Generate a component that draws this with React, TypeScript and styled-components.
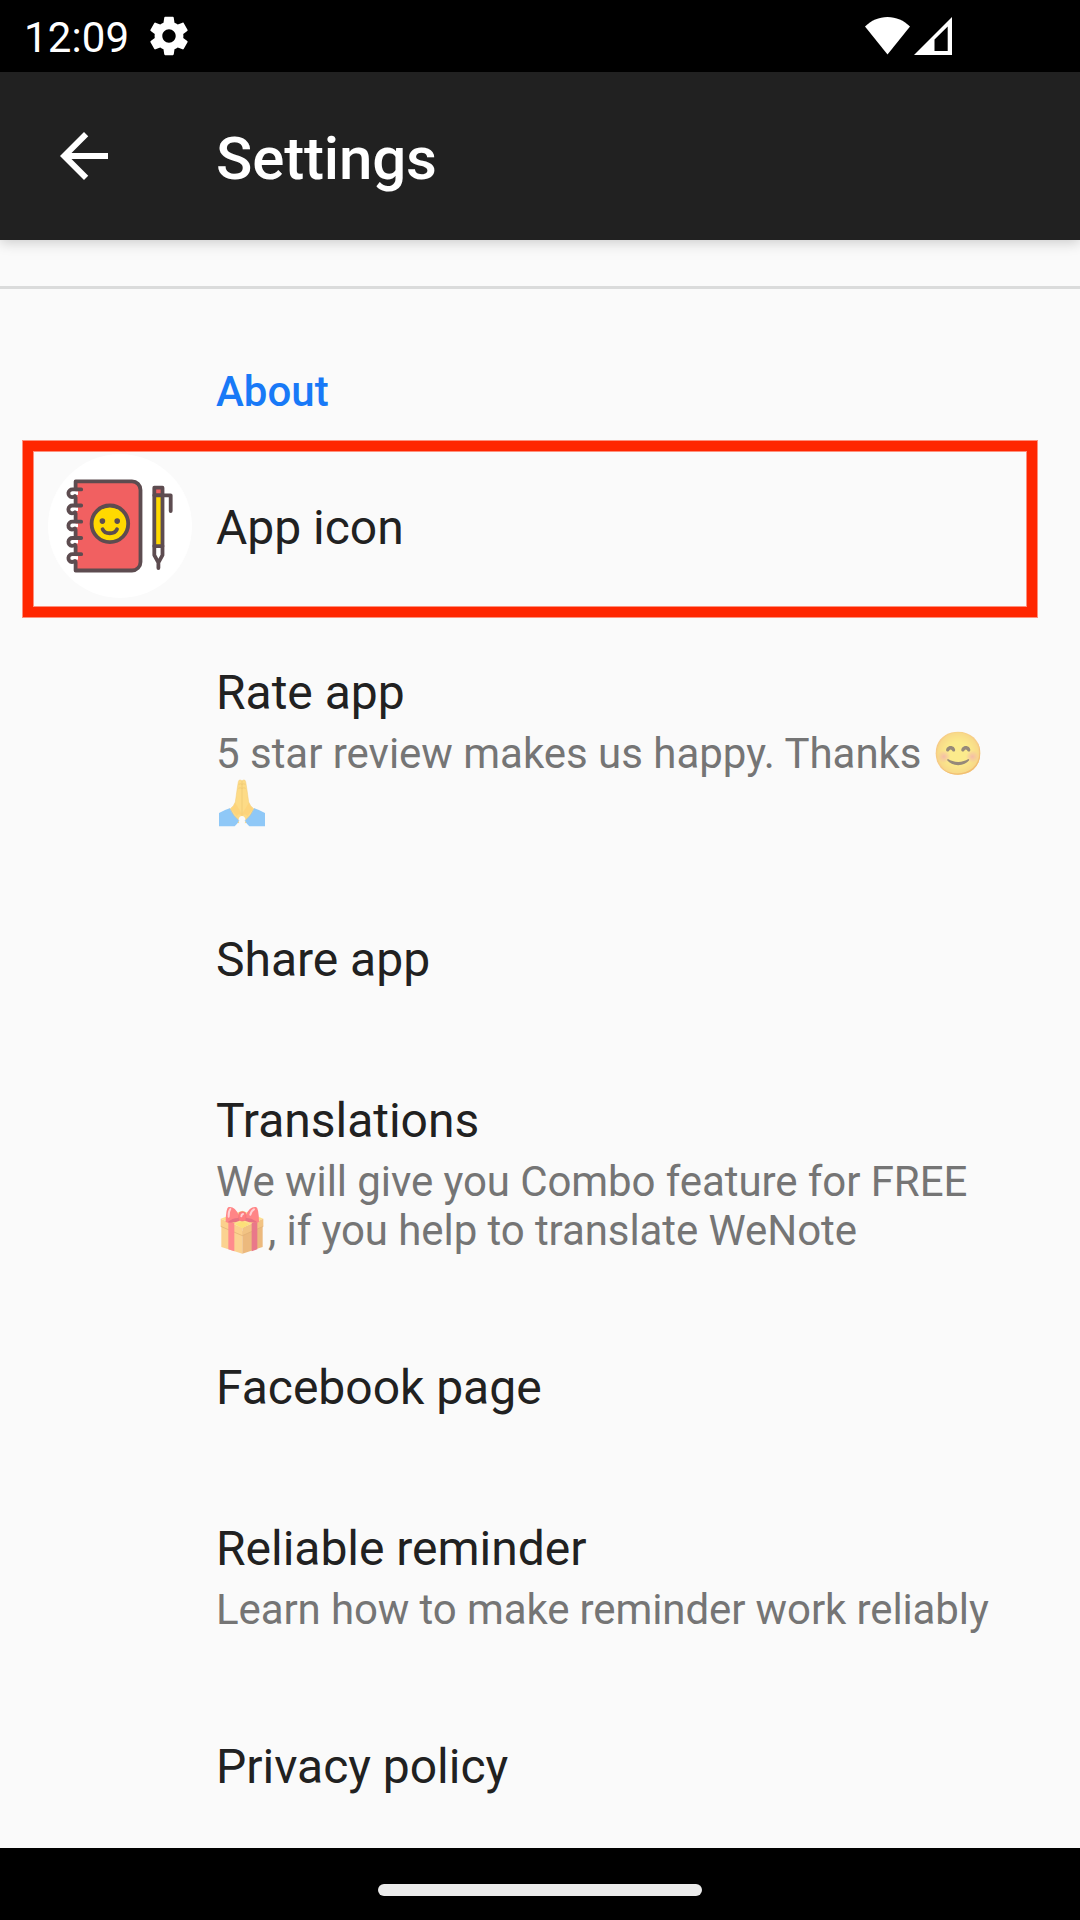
import React from "react";
import styled, { createGlobalStyle } from "styled-components";

const GlobalStyle = createGlobalStyle`
  body { margin: 0; background: #fafafa; }
  * { box-sizing: border-box; }
`;

const Screen = styled.div`
  width: 1080px;
  height: 1920px;
  display: flex;
  flex-direction: column;
  overflow: hidden;
  background: #fafafa;
  font-family: Roboto, "Liberation Sans", sans-serif;
  color: #212121;
`;

const StatusBar = styled.div`
  height: 72px;
  flex: none;
  display: flex;
  align-items: center;
  padding: 0 128px 0 24px;
  background: #000;
  color: #fff;
`;

const Clock = styled.span`
  font-size: 42px;
  line-height: 50px;
  width: 122px;
  padding-top: 3px;
  letter-spacing: 0.1px;
`;

const StatusIcons = styled.div`
  margin-left: auto;
  display: flex;
  gap: 4px;
`;

const AppBar = styled.header`
  height: 168px;
  flex: none;
  display: flex;
  align-items: center;
  padding: 0 48px;
  gap: 96px;
  background: #212121;
  color: #fff;
  z-index: 1;
  box-shadow: 0 3px 12px rgba(0, 0, 0, 0.18);
`;

const AppTitle = styled.h1`
  margin: 0;
  padding-top: 5px;
  font-size: 60px;
  line-height: 70px;
  font-weight: 500;
  letter-spacing: -0.15px;
`;

const List = styled.main`
  flex: 1;
  overflow: hidden;
  padding-top: 46px;
`;

const Category = styled.section`
  border-top: 3px solid #dadbdb;
`;

const CategoryTitle = styled.h2`
  margin: 0;
  height: 153px;
  padding: 78px 0 0 216px;
  font-size: 42px;
  line-height: 50px;
  font-weight: 500;
  color: #1879f7;
`;

const Row = styled.div<{ $compact?: boolean }>`
  position: relative;
  display: grid;
  grid-template-columns: 168px 1fr;
  align-items: center;
  padding: ${(p) => (p.$compact ? "12px 48px" : "50px 48px 46px")};
`;

const Labels = styled.div`
  grid-column: 2;
`;

const Title = styled.div<{ $lowered?: boolean }>`
  padding-top: ${(p) => (p.$lowered ? "2px" : "0")};
  font-size: 48px;
  line-height: 65px;
  white-space: nowrap;
  letter-spacing: -0.02px;
`;

const Summary = styled.div<{ $tracking?: number }>`
  padding: 4px 0;
  font-size: 42px;
  line-height: 49px;
  color: #757575;
  white-space: nowrap;
  letter-spacing: ${(p) => p.$tracking ?? 0}px;
`;

const SummaryLine = styled.div`
  height: 49px;
`;

const Emoji = styled.span`
  opacity: 0.54;
  color: #000;
`;

const EmojiDrawing = styled.svg`
  width: 52px;
  height: 49px;
  vertical-align: -10px;
`;

const Highlight = styled.div`
  position: absolute;
  left: 23px;
  top: -1px;
  width: 1014px;
  height: 176px;
  border: 10px solid #ff2600;
  box-shadow: 0 0 0 1px rgba(255, 38, 0, 0.5), inset 0 0 0 1px rgba(255, 38, 0, 0.5);
`;

const NavBar = styled.footer`
  height: 72px;
  flex: none;
  display: flex;
  justify-content: center;
  padding-top: 36px;
  background: #000;
`;

const Handle = styled.div`
  width: 324px;
  height: 12px;
  border-radius: 6px;
  background: #ebebeb;
`;

const GearIcon = () => (
  <svg width="46" height="46" viewBox="0 0 24 24" fill="#fff">
    <path d="M19.43 12.98c.04-.32.07-.64.07-.98s-.03-.66-.07-.98l2.11-1.65c.19-.15.24-.42.12-.64l-2-3.46c-.12-.22-.39-.3-.61-.22l-2.49 1c-.52-.4-1.08-.73-1.69-.98l-.38-2.65C14.46 2.18 14.25 2 14 2h-4c-.25 0-.46.18-.49.42l-.38 2.65c-.61.25-1.17.59-1.69.98l-2.49-1c-.23-.09-.49 0-.61.22l-2 3.46c-.13.22-.07.49.12.64l2.11 1.65c-.04.32-.07.65-.07.98s.03.66.07.98l-2.11 1.65c-.19.15-.24.42-.12.64l2 3.46c.12.22.39.3.61.22l2.49-1c.52.4 1.08.73 1.69.98l.38 2.65c.03.24.24.42.49.42h4c.25 0 .46-.18.49-.42l.38-2.65c.61-.25 1.17-.59 1.69-.98l2.49 1c.23.09.49 0 .61-.22l2-3.46c.12-.22.07-.49-.12-.64l-2.11-1.65zM12 15.5c-1.93 0-3.5-1.57-3.5-3.5s1.57-3.5 3.5-3.5 3.5 1.57 3.5 3.5-1.57 3.5-3.5 3.5z" />
  </svg>
);

const WifiIcon = () => (
  <svg width="45" height="38" viewBox="0 0 45 38" fill="#fff">
    <path d="M0 9.6C6 3.4 14 0 22.5 0S39 3.4 45 9.6L22.5 37.5z" />
  </svg>
);

const SignalIcon = () => (
  <svg width="38" height="38" viewBox="0 0 38 38" fill="#fff">
    <path fillRule="evenodd" d="M0 38 38 0V38zM20.5 22.5V34H33.7V9.5z" />
  </svg>
);

const BackIcon = () => (
  <svg width="72" height="72" viewBox="0 0 24 24" fill="#fff">
    <path d="M20 11H7.83l5.59-5.59L12 4l-8 8 8 8 1.41-1.41L7.83 13H20v-2z" />
  </svg>
);

const HandsDrawing = () => (
  <EmojiDrawing viewBox="18 23 156 147" role="img" aria-label="folded hands">
    <path
      d="M85 34q1-6 6-5l5 2 5-2q5-1 6 5l4 25 5 36q4 12 15 20l-18 42h-34L61 115q11-8 15-20l5-36z"
      fill="#fddb86"
      stroke="#f3cb74"
      strokeWidth="1.5"
    />
    <path d="M96 32v104M86 42q5-3 10 0 5-3 10 0M85 54q5-3 11 0 6-3 11 0" fill="none" stroke="#edc571" strokeWidth="2" />
    <path d="M76 98q-4 11-13 18l17 22q5-12 16-2 11-10 16 2l17-22q-9-7-13-18l-20 33z" fill="#fdcf75" opacity="0.6" />
    <path d="M85 150q2-13 11-13t11 13l-6 18H91z" fill="#fafafa" />
    <path d="M27 128q14-8 32-14 9 22 28 37-5 9-13 17H27z" fill="#8fc8f7" />
    <path d="M165 128q-14-8-32-14-9 22-28 37 5 9 13 17h47z" fill="#8fc8f7" />
    <path d="M59 114q9 22 28 37M133 114q-9 22-28 37" fill="none" stroke="#a9c0c9" strokeWidth="2" />
  </EmojiDrawing>
);

const GiftDrawing = () => (
  <EmojiDrawing viewBox="18 18 156 147" role="img" aria-label="wrapped gift">
    <path d="M34 72 97 94v67L34 141z" fill="#fbd291" />
    <path d="M158 72 97 94v67l61-20z" fill="#ecb97d" />
    <path d="m32 56 65-24 63 24-63 27z" fill="#fde08c" />
    <path d="M32 56 97 83v24L32 79z" fill="#fbd08c" />
    <path d="M160 56 97 83v24l63-28z" fill="#f2c383" />
    <path d="m32 79 65 28 63-28" fill="none" stroke="#e0ae72" strokeWidth="2" />
    <path d="M55 62 73 70v84l-18-6z" fill="#ff8a8d" />
    <path d="M142 62 125 70v84l17-6z" fill="#e9788a" />
    <path d="m76 73 21-9 21 9-21 12z" fill="#fce079" />
    <path d="M86 45Q75 18 56 21q-8 1-9 45 14 6 41-5zM108 45q11-27 30-24 8 1 9 45-14 6-41-5z" fill="#ff8586" />
    <path d="M52 67q17-14 34-13l3 8q-18 8-37 5zM142 67q-17-14-34-13l-3 8q18 8 37 5z" fill="#e77282" />
    <rect x="86" y="35" width="22" height="28" rx="9" fill="#ff7c7e" stroke="#ed6c76" strokeWidth="1.5" />
    <path d="M61 27q-6 8-5 23M132 28q-8 4-11 16M99 42q-5 1-5 7" fill="none" stroke="#ffd1d4" strokeWidth="6" strokeLinecap="round" />
  </EmojiDrawing>
);

const ringTops = [35.4, 51.5, 67.7, 84, 100.2];

const NotebookIcon = () => (
  <svg
    width="144"
    height="144"
    viewBox="0 0 144 144"
    fill="none"
    stroke="#5d4c50"
    strokeWidth="3.8"
    strokeLinecap="round"
    strokeLinejoin="round"
  >
    <circle cx="72" cy="72" r="72" fill="#fff" stroke="none" />
    <path d="M27.6 27.4H84a8.5 8.5 0 0 1 8.5 8.5V108a8.5 8.5 0 0 1-8.5 8.5H27.6z" fill="#f16061" stroke="none" />
    <path d="M27.6 35.4V27.4H84a8.5 8.5 0 0 1 8.5 8.5V108a8.5 8.5 0 0 1-8.5 8.5H27.6V108" />
    {ringTops.map((y, i) => (
      <g key={y}>
        <path d={`M26 ${y + 1.9}h4v3.6h-4z`} fill="#fff" stroke="none" />
        <path d={`M33.2 ${y}H24.6a3.9 3.9 0 0 0-.6 7.8q2 0 3-1.1`} />
        {i < 4 && <path d={`M27.6 ${y + 8}V${y + 15.5}`} />}
      </g>
    ))}
    <circle cx="61.9" cy="69.8" r="18.3" fill="#ffd900" />
    <circle cx="54.4" cy="67.1" r="2.8" fill="#5d4c50" stroke="none" />
    <circle cx="69.2" cy="67.1" r="2.8" fill="#5d4c50" stroke="none" />
    <path d="M54.6 75.2c2.4 5.4 12 5.4 14.4 0" />
    <path d="M106.3 33.7h8.2v7.6h-8.2z" fill="#f16061" />
    <path d="M106.3 41.3h8.2v50.8h-8.2z" fill="#ffd900" />
    <path d="M106.3 92.1v9l4.1 7.5 4.1-7.5v-9M110.4 108v6M114.5 41.3h8.2V57" />
  </svg>
);

type Item = { title: string; lines?: React.ReactNode[]; tracking?: number };

const items: Item[] = [
  {
    title: "Rate app",
    lines: [<>5 star review makes us happy. Thanks <Emoji>😊</Emoji></>, <HandsDrawing />],
    tracking: -0.02,
  },
  { title: "Share app" },
  {
    title: "Translations",
    lines: [
      "We will give you Combo feature for FREE",
      <><GiftDrawing />, if you help to translate WeNote</>,
    ],
    tracking: -0.08,
  },
  { title: "Facebook page" },
  {
    title: "Reliable reminder",
    lines: ["Learn how to make reminder work reliably"],
    tracking: -0.11,
  },
  { title: "Privacy policy" },
];

export default function App() {
  return (
    <>
      <GlobalStyle />
      <Screen>
        <StatusBar>
          <Clock>12:09</Clock>
          <GearIcon />
          <StatusIcons>
            <WifiIcon />
            <SignalIcon />
          </StatusIcons>
        </StatusBar>
        <AppBar>
          <BackIcon />
          <AppTitle>Settings</AppTitle>
        </AppBar>
        <List>
          <Category>
            <CategoryTitle>About</CategoryTitle>
            <Row $compact>
              <NotebookIcon />
              <Labels>
                <Title $lowered>App icon</Title>
              </Labels>
              <Highlight />
            </Row>
            {items.map((item) => (
              <Row key={item.title}>
                <Labels>
                  <Title>{item.title}</Title>
                  {item.lines && (
                    <Summary $tracking={item.tracking}>
                      {item.lines.map((line, i) => (
                        <SummaryLine key={i}>{line}</SummaryLine>
                      ))}
                    </Summary>
                  )}
                </Labels>
              </Row>
            ))}
          </Category>
        </List>
        <NavBar>
          <Handle />
        </NavBar>
      </Screen>
    </>
  );
}
